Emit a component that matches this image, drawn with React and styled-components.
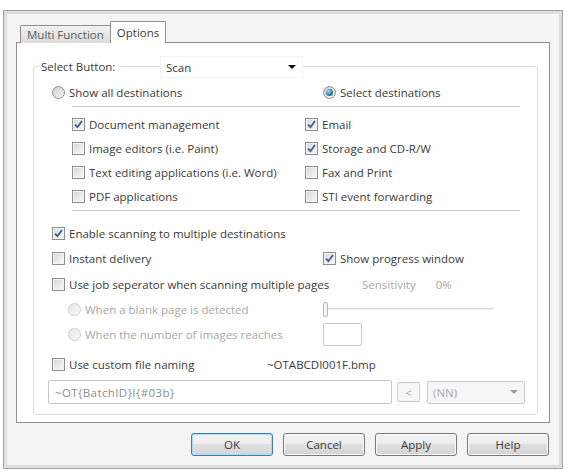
import React from 'react';
import styled, { createGlobalStyle, css } from 'styled-components';

const Global = createGlobalStyle`
  html, body { margin: 0; padding: 0; background: #ffffff; }
  body {
    font-family: "Open Sans", "Noto Sans", sans-serif;
    font-size: 11.5px;
    color: #3a3a3a;
  }
  * { box-sizing: border-box; }
`;

const Frame = styled.div`
  margin: 10px 0 0 3px;
  width: 560px;
  height: 459px;
  border: 1px solid #a3a3a3;
  box-shadow: inset 0 0 0 3px #dedede;
  background: #f4f4f4;
  padding: 10px 12px 12px 12px;
  display: flex;
  flex-direction: column;
`;

const TabStrip = styled.div`
  display: flex;
  align-items: flex-end;
  height: 22px;
  margin-bottom: -1px;
  padding-left: 4px;
  position: relative;
  z-index: 1;
`;

const Tab = styled.div`
  display: flex;
  align-items: center;
  border: 1px solid #8e8f8f;
  border-bottom: none;
  border-radius: 2px 2px 0 0;
  white-space: nowrap;
  ${(p) =>
    p.$active
      ? css`
          height: 22px;
          padding: 0 6px;
          background: #ffffff;
          margin-left: -1px;
          color: #3a3a3a;
        `
      : css`
          height: 18px;
          padding: 0 6px;
          background: linear-gradient(#f2f2f2, #e6e6e6 50%, #dcdcdc);
          color: #5a5a5a;
        `}
`;

const Panel = styled.div`
  height: 381px;
  border: 1px solid #8e8f8f;
  background: #ffffff;
  padding: 23px 11px 7px 16px;
`;

const Group = styled.div`
  height: 349px;
  border: 1px solid #d5dfe5;
  border-radius: 3px;
  display: flex;
  flex-direction: column;
`;

const Header = styled.div`
  display: flex;
  align-items: center;
  height: 22px;
  margin-top: -11px;
`;

const HeaderLabel = styled.div`
  width: 81px;
  margin-left: 5px;
  padding: 0 2px;
  background: #ffffff;
  line-height: 22px;
`;

const Combo = styled.div`
  display: flex;
  align-items: center;
  justify-content: space-between;
  margin-left: ${(p) => (p.$disabled ? 0 : 40)}px;
  width: ${(p) => (p.$disabled ? 98 : 143)}px;
  height: ${(p) => (p.$disabled ? 23 : 22)}px;
  padding: 0 6px 0 5px;
  background: #ffffff;
  border: 1px solid ${(p) => (p.$disabled ? '#c9c9c9' : '#f4f4f4')};
  color: ${(p) => (p.$disabled ? '#a8a8a8' : '#3a3a3a')};
  ${(p) =>
    p.$disabled &&
    css`
      background: #f6f6f6;
      border-radius: 2px;
    `}
`;

const Arrow = styled.span`
  width: 0;
  height: 0;
  border-left: 4px solid transparent;
  border-right: 4px solid transparent;
  border-top: 4px solid ${(p) => (p.$disabled ? '#9a9a9a' : '#111')};
`;

const Row = styled.div`
  display: flex;
  align-items: center;
  height: ${(p) => p.$h || 24}px;
  margin-top: ${(p) => p.$mt || 0}px;
  padding-left: ${(p) => p.$pl || 0}px;
`;

const Cell = styled.div`
  display: flex;
  align-items: center;
  flex: none;
  width: ${(p) => (p.$w ? `${p.$w}px` : 'auto')};
  margin-left: ${(p) => p.$ml || 0}px;
  white-space: nowrap;
`;

const Divider = styled.div`
  height: 1px;
  background: #c5c5c5;
  margin: ${(p) => p.$mt}px 17px 0 38px;
`;

const Grid = styled.div`
  display: grid;
  grid-template-columns: 233px 1fr;
  grid-auto-rows: 24px;
  margin-top: 5px;
  padding-left: 38px;
`;

const Choice = styled.label`
  display: flex;
  align-items: center;
  gap: 4px;
  white-space: nowrap;
  color: ${(p) => (p.$disabled ? '#a8a8a8' : '#3a3a3a')};
`;

const Box = styled.span`
  flex: none;
  width: 13px;
  height: 13px;
  border: 1px solid ${(p) => (p.$disabled ? '#c2c2c2' : '#8e8f8f')};
  background: linear-gradient(135deg, #d6d6d6, #ebebeb 55%, #f9f9f9);
  box-shadow: inset 0 0 0 1px #f4f4f4;
  display: flex;
  align-items: center;
  justify-content: center;
`;

const Round = styled.span`
  flex: none;
  width: 13px;
  height: 13px;
  border-radius: 50%;
  border: 1px solid ${(p) => (p.$disabled ? '#cfcfcf' : '#8e8f8f')};
  background: ${(p) =>
    p.$disabled
      ? 'linear-gradient(135deg, #e6e6e6, #f8f8f8)'
      : 'linear-gradient(135deg, #cfcfcf, #f4f4f4)'};
  display: flex;
  align-items: center;
  justify-content: center;
`;

const Dot = styled.span`
  width: 7px;
  height: 7px;
  border-radius: 50%;
  background: radial-gradient(circle at 35% 35%, #9fe0f2, #2d7fa3 55%, #164a66);
`;

const Muted = styled.span`
  color: #a8a8a8;
`;

const Slider = styled.div`
  position: relative;
  width: 170px;
  height: 17px;
  display: flex;
  align-items: center;
`;

const Track = styled.div`
  flex: 1;
  height: 2px;
  background: #d6d6d6;
  border-bottom: 1px solid #f0f0f0;
`;

const Thumb = styled.div`
  position: absolute;
  left: 0;
  top: 1px;
  width: 5px;
  height: 15px;
  border: 1px solid #b5b5b5;
  border-radius: 2px;
  background: #f6f6f6;
`;

const NumberBox = styled.div`
  width: 39px;
  height: 23px;
  border: 1px solid #c8c8c8;
  border-radius: 2px;
  background: #ffffff;
`;

const Field = styled.div`
  display: flex;
  align-items: center;
  width: 344px;
  height: 24px;
  padding-left: 6px;
  border: 1px solid #c8c8c8;
  border-radius: 2px;
  color: #8c8c8c;
  background: #ffffff;
  letter-spacing: 0.4px;
`;

const SmallButton = styled.div`
  display: flex;
  align-items: center;
  justify-content: center;
  width: 23px;
  height: 20px;
  margin: 0 7px 0 5px;
  border: 1px solid #cacaca;
  border-radius: 2px;
  background: #f6f6f6;
  color: #a8a8a8;
`;

const Buttons = styled.div`
  display: flex;
  justify-content: flex-end;
  gap: 10px;
  margin-top: 10px;
  padding-right: 1px;
`;

const Button = styled.div`
  display: flex;
  align-items: center;
  justify-content: center;
  width: 82px;
  height: 23px;
  border: 1px solid ${(p) => (p.$default ? '#3c7fb1' : '#7a7a7a')};
  border-radius: 3px;
  background: linear-gradient(#f4f4f4, #ededed 45%, #e0e0e0 50%, #d4d4d4);
  box-shadow: inset 0 0 0 1px ${(p) => (p.$default ? '#a8dcf0' : '#fbfbfb')};
  color: #3a3a3a;
`;

const Check = () => (
  <svg width="9" height="9" viewBox="0 0 9 9">
    <path d="M1 4.6 L3.4 7.2 L8 1" fill="none" stroke="#3b5c96" strokeWidth="1.8" />
  </svg>
);

const CheckBox = ({ checked, disabled, children }) => (
  <Choice $disabled={disabled}>
    <Box $disabled={disabled}>{checked && <Check />}</Box>
    <span>{children}</span>
  </Choice>
);

const Radio = ({ checked, disabled, children }) => (
  <Choice $disabled={disabled}>
    <Round $disabled={disabled}>{checked && <Dot />}</Round>
    <span>{children}</span>
  </Choice>
);

const destinations = [
  ['Document management', true],
  ['Email', true],
  ['Image editors (i.e. Paint)', false],
  ['Storage and CD-R/W', true],
  ['Text editing applications (i.e. Word)', false],
  ['Fax and Print', false],
  ['PDF applications', false],
  ['STI event forwarding', false],
];

export default function App() {
  return (
    <>
      <Global />
      <Frame>
        <TabStrip>
          <Tab>Multi Function</Tab>
          <Tab $active>Options</Tab>
        </TabStrip>
        <Panel>
          <Group>
            <Header>
              <HeaderLabel>Select Button:</HeaderLabel>
              <Combo>
                <span>Scan</span>
                <Arrow />
              </Combo>
            </Header>

            <Row $h={18} $mt={5} $pl={18}>
              <Cell $w={271}>
                <Radio>Show all destinations</Radio>
              </Cell>
              <Cell>
                <Radio checked>Select destinations</Radio>
              </Cell>
            </Row>

            <Divider $mt={5} />

            <Grid>
              {destinations.map(([label, on]) => (
                <CheckBox key={label} checked={on}>
                  {label}
                </CheckBox>
              ))}
            </Grid>

            <Divider $mt={2} />

            <Row $h={24} $mt={10} $pl={18}>
              <CheckBox checked>Enable scanning to multiple destinations</CheckBox>
            </Row>
            <Row $h={26} $pl={18}>
              <Cell $w={271}>
                <CheckBox>Instant delivery</CheckBox>
              </Cell>
              <Cell>
                <CheckBox checked>Show progress window</CheckBox>
              </Cell>
            </Row>
            <Row $h={26} $pl={18}>
              <Cell $w={310}>
                <CheckBox>Use job seperator when scanning multiple pages</CheckBox>
              </Cell>
              <Cell>
                <Muted>Sensitivity</Muted>
                <Cell $ml={20}>
                  <Muted>0%</Muted>
                </Cell>
              </Cell>
            </Row>
            <Row $h={24} $pl={34}>
              <Cell $w={255}>
                <Radio disabled>When a blank page is detected</Radio>
              </Cell>
              <Slider>
                <Track />
                <Thumb />
              </Slider>
            </Row>
            <Row $h={26} $pl={34}>
              <Cell $w={255}>
                <Radio disabled>When the number of images reaches</Radio>
              </Cell>
              <NumberBox />
            </Row>
            <Row $h={24} $mt={5} $pl={18}>
              <Cell $w={215}>
                <CheckBox>Use custom file naming</CheckBox>
              </Cell>
              <Cell>~OTABCDI001F.bmp</Cell>
            </Row>
            <Row $h={24} $mt={4} $pl={14}>
              <Field>~OT{'{'}BatchID{'}'}I{'{'}#03b{'}'}</Field>
              <SmallButton>&lt;</SmallButton>
              <Combo $disabled>
                <span>(NN)</span>
                <Arrow $disabled />
              </Combo>
            </Row>
          </Group>
        </Panel>
        <Buttons>
          <Button $default>OK</Button>
          <Button>Cancel</Button>
          <Button>Apply</Button>
          <Button>Help</Button>
        </Buttons>
      </Frame>
    </>
  );
}
